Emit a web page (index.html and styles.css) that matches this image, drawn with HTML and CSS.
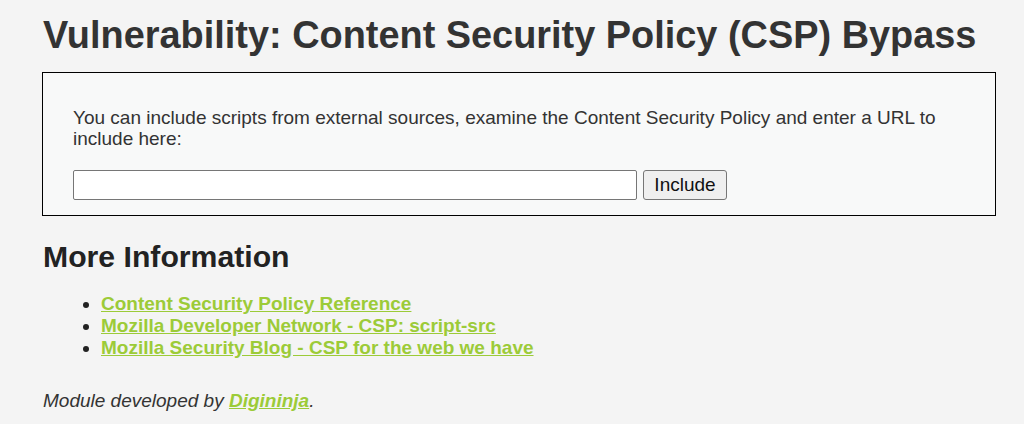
FILE: index.html
```html
<!DOCTYPE html>
<html>
<head>
<meta charset="utf-8">
<link rel="stylesheet" href="styles.css">
</head>
<body>
<div class="page">
  <h1 class="title">Vulnerability: Content Security Policy (CSP) Bypass</h1>
  <div class="vuln-box">
    <form class="csp-form">
      <p class="intro">You can include scripts from external sources, examine the Content Security Policy and enter a URL to include here:</p>
      <div class="form-row">
        <input type="text" class="url-input" name="include">
        <button type="button" class="include-btn">Include</button>
      </div>
    </form>
  </div>
  <h2 class="subtitle">More Information</h2>
  <ul class="links">
    <li><a href="#">Content Security Policy Reference</a></li>
    <li><a href="#">Mozilla Developer Network - CSP: script-src</a></li>
    <li><a href="#">Mozilla Security Blog - CSP for the web we have</a></li>
  </ul>
  <p class="credit">Module developed by <a href="#">Digininja</a>.</p>
</div>
</body>
</html>
```
FILE: styles.css
```css
html, body {
  margin: 0;
  padding: 0;
  background: #f4f4f4;
}
body {
  font-family: "Liberation Sans", Arial, sans-serif;
  color: #2f2f2f;
}
.page {
  padding: 13px 28px 0 42px;
}
.title {
  margin: 0 0 15px 1px;
  font-size: 37.9px;
  line-height: 44px;
  font-weight: bold;
  color: #333;
}
.vuln-box {
  border: 1px solid #000;
  background: #f8f9f9;
  padding: 34px 30px 15px 30px;
  width: 892px;
}
.intro {
  margin: 0 0 21px 0;
  font-size: 19px;
  line-height: 21px;
  color: #333;
}
.form-row {
  display: flex;
  align-items: center;
  gap: 6px;
}
.url-input {
  width: 564px;
  height: 30px;
  box-sizing: border-box;
  border: 1px solid #767676;
  border-radius: 2px;
  background: #fff;
  margin: 0;
}
.include-btn {
  height: 30px;
  width: 84px;
  box-sizing: border-box;
  border: 1px solid #767676;
  border-radius: 3px;
  background: #efefef;
  font-family: "Liberation Sans", Arial, sans-serif;
  font-size: 19px;
  color: #111;
  padding: 0;
}
.subtitle {
  margin: 23px 0 0 1px;
  font-size: 30.2px;
  line-height: 36px;
  font-weight: bold;
  color: #222;
}
.links {
  margin: 18px 0 0 0;
  padding-left: 59px;
  font-size: 19px;
  line-height: 22px;
  font-weight: bold;
}
.links li::marker {
  color: #222;
}
a {
  color: #9ccb38;
  text-decoration: underline;
}
.credit {
  margin: 31px 0 0 1px;
  font-style: italic;
  font-size: 19px;
  color: #333;
}
.credit a {
  font-weight: bold;
}
```
